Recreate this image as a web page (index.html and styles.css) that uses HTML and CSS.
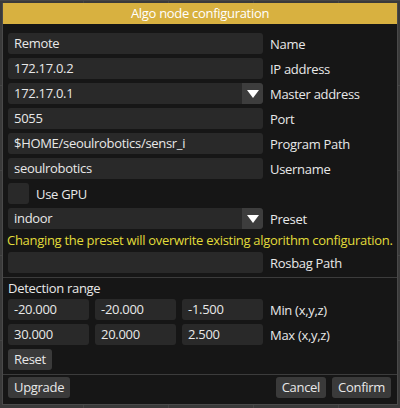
FILE: index.html
```html
<!DOCTYPE html>
<html>
<head>
<meta charset="utf-8">
<link rel="stylesheet" href="styles.css">
</head>
<body>
<div class="window">
  <div class="titlebar">Algo node configuration</div>
  <div class="content">
    <div class="row"><div class="input">Remote</div><span class="label">Name</span></div>
    <div class="row"><div class="input">172.17.0.2</div><span class="label">IP address</span></div>
    <div class="row"><div class="combo"><div class="combo-text">172.17.0.1</div><div class="arrow"><svg width="12" height="8" viewBox="0 0 12 8"><polygon points="0,0 12,0 6,8" fill="#ffffff"/></svg></div></div><span class="label">Master address</span></div>
    <div class="row"><div class="input">5055</div><span class="label">Port</span></div>
    <div class="row"><div class="input">$HOME/seoulrobotics/sensr_i</div><span class="label">Program Path</span></div>
    <div class="row"><div class="input">seoulrobotics</div><span class="label">Username</span></div>
    <div class="row"><div class="checkbox"></div><span class="check-label">Use GPU</span></div>
    <div class="row"><div class="combo"><div class="combo-text">indoor</div><div class="arrow"><svg width="12" height="8" viewBox="0 0 12 8"><polygon points="0,0 12,0 6,8" fill="#ffffff"/></svg></div></div><span class="label">Preset</span></div>
    <div class="warning">Changing the preset will overwrite existing algorithm configuration.</div>
    <div class="row"><div class="input"></div><span class="label">Rosbag Path</span></div>
    <div class="separator"></div>
    <div class="section">Detection range</div>
    <div class="row"><div class="triple"><div class="input small">-20.000</div><div class="input small">-20.000</div><div class="input small">-1.500</div></div><span class="label">Min (x,y,z)</span></div>
    <div class="row"><div class="triple"><div class="input small">30.000</div><div class="input small">20.000</div><div class="input small">2.500</div></div><span class="label">Max (x,y,z)</span></div>
    <div class="row"><div class="button">Reset</div></div>
    <div class="separator"></div>
    <div class="footer">
      <div class="button">Upgrade</div>
      <div class="spacer"></div>
      <div class="button">Cancel</div>
      <div class="button">Confirm</div>
    </div>
  </div>
</div>
</body>
</html>
```
FILE: styles.css
```css
html, body {
  margin: 0;
  padding: 0;
}
body {
  width: 400px;
  height: 408px;
  background-color: #3a3a3a;
  background-image:
    linear-gradient(to right, #464646 1px, transparent 1px),
    linear-gradient(to bottom, #464646 1px, transparent 1px);
  background-size: 85px 85px;
  background-position: 83px 0, 0 0;
  font-family: "Open Sans", "Noto Sans", sans-serif;
  font-size: 13px;
  letter-spacing: -0.3px;
  color: #e8e8e8;
  overflow: hidden;
}
.window {
  margin: 3px 0 0 2px;
  width: 394px;
  height: 401px;
  background: #161616;
  border: 1px solid #4a4a4a;
  border-top: none;
}
.titlebar {
  height: 21px;
  background: #d8b140;
  color: #ffffff;
  text-align: center;
  line-height: 21px;
  font-size: 13px;
}
.content {
  padding: 9px 6px 0 5px;
  display: flex;
  flex-direction: column;
  gap: 4px;
}
.row {
  display: flex;
  align-items: center;
  height: 21px;
}
.input, .combo {
  width: 255px;
  height: 21px;
  box-sizing: border-box;
  background: #292929;
  border-radius: 3px;
  padding-left: 6px;
  line-height: 21px;
  white-space: nowrap;
  overflow: hidden;
}
.combo {
  display: flex;
  padding-left: 0;
}
.combo-text {
  flex: 1;
  padding-left: 6px;
}
.arrow {
  width: 21px;
  height: 21px;
  background: #3d3d3d;
  border-radius: 0 3px 3px 0;
  display: flex;
  align-items: center;
  justify-content: center;
}
.label {
  margin-left: 7px;
}
.checkbox {
  width: 21px;
  height: 21px;
  background: #292929;
  border-radius: 3px;
}
.check-label {
  margin-left: 7px;
}
.warning {
  height: 15px;
  line-height: 15px;
  color: #e2dc3a;
  margin-left: -1px;
  white-space: nowrap;
}
.separator {
  height: 1px;
  background: #3c3c3c;
  margin: 0 -6px 0 -5px;
}
.section {
  height: 13px;
  line-height: 13px;
}
.triple {
  display: flex;
  gap: 6px;
  width: 255px;
}
.input.small {
  width: 81px;
}
.button {
  height: 21px;
  line-height: 21px;
  background: #3a3a3a;
  border-radius: 3px;
  padding: 0 6px;
}
.footer {
  display: flex;
  gap: 6px;
  height: 21px;
  margin-top: -2px;
}
.spacer {
  flex: 1;
}
```
